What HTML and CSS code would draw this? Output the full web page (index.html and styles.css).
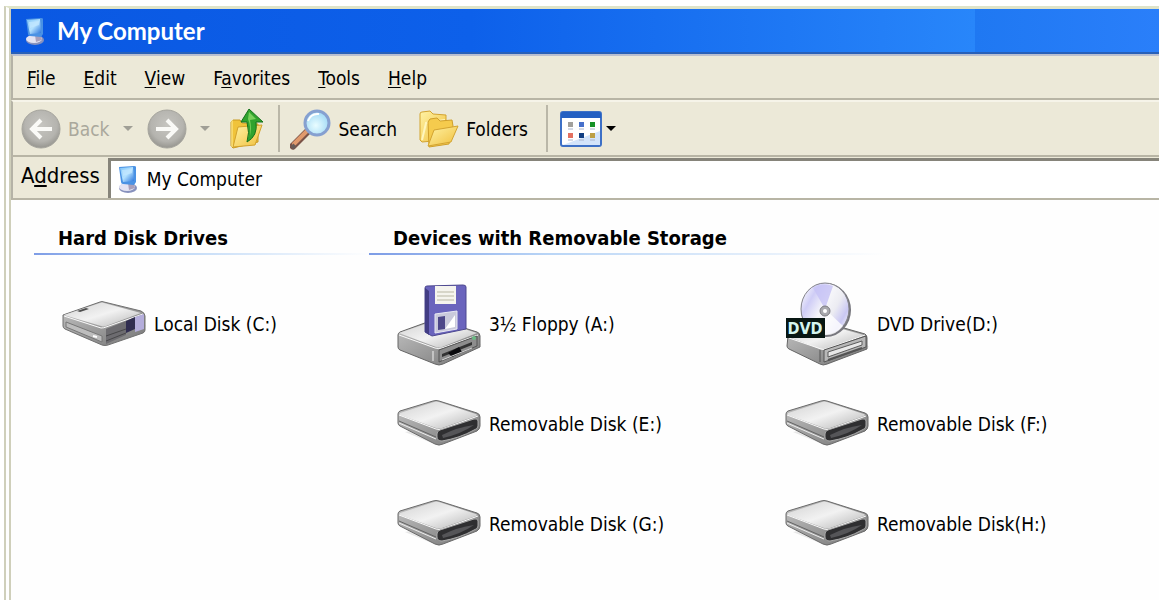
FILE: index.html
```html
<!DOCTYPE html>
<html lang="en">
  <head>
    <meta charset="UTF-8" />
    <meta name="viewport" content="width=device-width, initial-scale=1.0" />
    <title>My Computer</title>
    <link rel="stylesheet" href="styles.css">
  </head>
  <body>
    <!-- shared drawings -->
    <svg class="defs" width="0" height="0" aria-hidden="true">
      <defs>
        <linearGradient id="screen" x1="0" y1="0" x2="1" y2="1">
          <stop offset="0" stop-color="#7fc4f8" />
          <stop offset="0.5" stop-color="#b4e2ff" />
          <stop offset="1" stop-color="#2a74dc" />
        </linearGradient>
        <linearGradient id="top" x1="0" y1="0" x2="1" y2="1">
          <stop offset="0" stop-color="#d2d2d2" />
          <stop offset="0.5" stop-color="#f2f2f2" />
          <stop offset="1" stop-color="#b4b4b4" />
        </linearGradient>
        <linearGradient id="side" x1="0" y1="0" x2="1" y2="1">
          <stop offset="0" stop-color="#c4c4c4" />
          <stop offset="1" stop-color="#757575" />
        </linearGradient>
        <linearGradient id="yellow" x1="0" y1="0" x2="1" y2="1">
          <stop offset="0" stop-color="#fff3a6" />
          <stop offset="1" stop-color="#f0bf3c" />
        </linearGradient>
        <radialGradient id="gray" cx="0.5" cy="0.4" r="0.6">
          <stop offset="0" stop-color="#c6c5c0" />
          <stop offset="0.7" stop-color="#b5b4af" />
          <stop offset="1" stop-color="#96958f" />
        </radialGradient>
        <radialGradient id="lens" cx="0.45" cy="0.6" r="0.6">
          <stop offset="0" stop-color="#e9fdff" />
          <stop offset="1" stop-color="#9fd8f5" />
        </radialGradient>
        <linearGradient id="disc" x1="0" y1="0.2" x2="1" y2="0.8">
          <stop offset="0" stop-color="#f7f7fc" />
          <stop offset="0.2" stop-color="#cfcdf6" />
          <stop offset="0.45" stop-color="#f6f6fa" />
          <stop offset="0.65" stop-color="#ececf2" />
          <stop offset="0.85" stop-color="#cac8f4" />
          <stop offset="1" stop-color="#f2f2f8" />
        </linearGradient>
      </defs>
      <symbol id="computer" viewBox="0 0 22 28">
        <ellipse cx="11" cy="23" rx="9" ry="5" fill="#8791bd" />
        <ellipse cx="10" cy="22" rx="8" ry="4" fill="#e3e3f3" />
        <path d="M11 18l6 1 1 4-6 2z" fill="#a9a0bb" />
        <path d="M2 2l15-1q2 0 2 1v15l-2 3-11-1q-2 0-2-2z" fill="#4a92e4" />
        <path d="M3 3l13-1 1 14-11 1z" fill="url(#screen)" />
        <path d="M5 5l10-1v4l-9 3z" fill="#c5e8ff" opacity="0.7" />
      </symbol>
      <symbol id="removable" viewBox="0 0 84 48">
        <path d="M8 32l34 14 42-22-6-4z" fill="#d8d8d8" opacity="0.6" />
        <path d="M1 14q0-2 2-3L36 1q3-1 6 0l38 12q3 1 3 4v9q0 3-3 5L46 44q-4 2-8 0L3 26q-2-1-2-3z" fill="url(#side)" stroke="#6a6a6a" />
        <path d="M3 13L37 2q2-1 5 0l37 12q2 1 0 2L45 28q-3 1-6 0L3 15q-1-1 0-2z" fill="url(#top)" />
        <path d="M2 15l37 14q3 1 6 0l36-13" fill="none" stroke="#fafafa" />
        <path d="M2 21l37 16" fill="none" stroke="#646464" />
        <path d="M2 23l37 16" fill="none" stroke="#eee" />
        <path d="M40 34q0-3 3-4l34-11q4-1 4 2v5q0 3-4 4-14 8-32 11-5 0-5-4z" fill="#2f2f31" stroke="#aaa" />
        <path d="M45 35q16-8 32-10-13 9-31 13z" fill="#555558" />
      </symbol>
    </svg>

    <div class="window">
      <header class="titlebar">
        <svg class="title-icon" viewBox="0 0 22 28"><use href="#computer" /></svg>
        <h1>My Computer</h1>
      </header>

      <nav class="menubar">
        <button type="button"><u>F</u>ile</button>
        <button type="button"><u>E</u>dit</button>
        <button type="button"><u>V</u>iew</button>
        <button type="button">F<u>a</u>vorites</button>
        <button type="button"><u>T</u>ools</button>
        <button type="button"><u>H</u>elp</button>
      </nav>

      <div class="toolbar">
        <button type="button" class="tool nav" disabled>
          <svg width="40" height="40" viewBox="0 0 40 40">
            <circle cx="20" cy="20" r="19" fill="url(#gray)" stroke="#a5a49d" />
            <path d="M31 20H12M20 11l-9 9 9 9" fill="none" stroke="#fafaf7" stroke-width="4" />
          </svg>
          Back
          <svg class="arrow" width="10" height="6" viewBox="0 0 10 6"><path d="M0 0h10L5 5z" fill="#a09f96" /></svg>
        </button>
        <button type="button" class="tool nav" aria-label="Forward" disabled>
          <svg width="40" height="40" viewBox="0 0 40 40">
            <circle cx="20" cy="20" r="19" fill="url(#gray)" stroke="#a5a49d" />
            <path d="M9 20h19M20 11l9 9-9 9" fill="none" stroke="#fafaf7" stroke-width="4" />
          </svg>
          <svg class="arrow" width="10" height="6" viewBox="0 0 10 6"><path d="M0 0h10L5 5z" fill="#a09f96" /></svg>
        </button>
        <button type="button" class="tool up" aria-label="Up">
          <svg width="34" height="42" viewBox="0 0 34 42">
            <path d="M1 14l2-2h7l2 3 16 1v18L3 40 1 38z" fill="#f0c33a" stroke="#c99a22" />
            <path d="M3 39l5-20 24-2-7 20z" fill="url(#yellow)" stroke="#d2a22b" />
            <path d="M2 12v27" stroke="#fff09c" />
            <path d="M19 1l14 13h-7q2 14-9 20 3-9 0-20h-6z" fill="#30a32e" stroke="#14711b" />
            <path d="M19 4l7 7-6 1q2 9 0 16 1-10-2-17z" fill="#7ad05c" />
          </svg>
        </button>
        <span class="separator"></span>
        <button type="button" class="tool search">
          <svg width="42" height="42" viewBox="0 0 42 42">
            <path d="M3 38l15-15" stroke="#7a5347" stroke-width="7" stroke-linecap="round" />
            <path d="M4 36l13-13" stroke="#e0996c" stroke-width="4" stroke-linecap="round" />
            <path d="M2 37l3 3" stroke="#665c58" stroke-width="4" />
            <circle cx="27" cy="15" r="12" fill="url(#lens)" stroke="#86a0d0" stroke-width="3" />
            <path d="M18 13q3-8 11-7" fill="none" stroke="#fff" stroke-width="2" />
          </svg>
          Search
        </button>
        <button type="button" class="tool folders">
          <svg width="40" height="38" viewBox="0 0 40 38">
            <path d="M1 4q0-2 2-2l8-1 3 3 13 1v7l-2 18-22 2-2-2z" fill="url(#yellow)" stroke="#d3a431" />
            <path d="M3 30l4-17 19-3" fill="none" stroke="#fff6bd" stroke-width="2" />
            <path d="M9 12l2-3 7-1 3 3 12-1 1 6-4 18-20 3z" fill="#f5cb4d" stroke="#cf9f2b" />
            <path d="M9 36l6-16 24-4-7 16z" fill="url(#yellow)" stroke="#d3a431" />
          </svg>
          Folders
        </button>
        <span class="separator"></span>
        <button type="button" class="tool views" aria-label="Views">
          <svg width="42" height="36" viewBox="0 0 42 36">
            <rect x="1" y="1" width="40" height="34" rx="2" fill="#fff" stroke="#3d70c6" stroke-width="2" />
            <path d="M40 8v26H3l37-14z" fill="#d3e4fa" />
            <path d="M1 3q0-2 2-2h36q2 0 2 2v4H1z" fill="#235fc2" />
            <path d="M8 11h5v5H8z" fill="#a1a09c" />
            <path d="M19 11h5v5h-5z" fill="#4770cb" />
            <path d="M30 11h5v5h-5z" fill="#159126" />
            <path d="M8 22h5v5H8z" fill="#e37060" />
            <path d="M19 22h5v5h-5z" fill="#123f83" />
            <path d="M30 22h5v5h-5z" fill="#bd9f45" />
            <path d="M8 18h5M19 18h5M30 18h5M8 29h5M19 29h5M30 29h5" stroke="#a9b4cc" />
          </svg>
          <svg class="arrow" width="10" height="6" viewBox="0 0 10 6"><path d="M0 0h10L5 5z" /></svg>
        </button>
      </div>

      <div class="addressbar">
        <label for="address">A<u>d</u>dress</label>
        <div class="field">
          <svg class="field-icon" viewBox="0 0 22 28"><use href="#computer" /></svg>
          <input type="text" id="address" value="My Computer" />
        </div>
      </div>

      <main class="content">
        <section>
          <h2>Hard Disk Drives</h2>
          <ul class="drives">
            <li>
              <a href="#">
                <svg width="84" height="48" viewBox="0 0 84 48">
                  <path d="M8 32l34 14 42-20-6-6z" fill="#d8d8d8" opacity="0.6" />
                  <path d="M1 15l37-13q2-1 4 0l37 9q4 2 4 5v14q0 2-2 3L46 45q-3 1-6 0L3 29q-2-1-2-3z" fill="url(#side)" stroke="#707070" />
                  <path d="M2 15L38 3q2-1 4 0l37 10-35 13q-2 1-5 0z" fill="url(#top)" />
                  <path d="M2 16l37 12q3 0 5-1l37-13" fill="none" stroke="#fafafa" />
                  <path d="M4 22l36 14v6L4 27z" fill="#bdbdbd" stroke="#777" />
                  <path d="M44 29l20-8v14l-20 9z" fill="#6d6c70" />
                  <path d="M64 21l9-4v12l-9 4z" fill="#302d50" />
                  <path d="M73 17l9-3v15l-9 3z" fill="#b4addb" />
                  <path d="M44 36l20-7m-20 12l20-8" stroke="#474749" />
                  <path d="M15 11l9-3 3 1-9 3z" fill="#4e4e4e" />
                  <path d="M31 36l4 1" stroke="#fff" stroke-width="2" />
                </svg>
                <span>Local Disk (C:)</span>
              </a>
            </li>
          </ul>
        </section>

        <section>
          <h2>Devices with Removable Storage</h2>
          <ul class="drives two">
            <li>
              <a href="#">
                <svg width="84" height="84" viewBox="0 -2 84 84">
                  <path d="M6 66l36 15 42-20-8-8z" fill="#d8d8d8" opacity="0.6" />
                  <path d="M1 51q0-2 2-3l33-12q3-1 6 0l38 12q3 1 3 4v11L46 80q-4 2-8 0L3 66q-2-1-2-3z" fill="url(#side)" stroke="#666" />
                  <path d="M2 49l35-12h5l38 12-35 14q-3 1-6 0z" fill="url(#top)" />
                  <path d="M2 51l36 13q3 1 7 0l36-13" fill="none" stroke="#fafafa" />
                  <path d="M36 67v10" stroke="#f2f2f2" />
                  <path d="M42 66l38-14v10L42 78z" fill="#8d8d8d" stroke="#555" />
                  <path d="M45 70l30-12v3L45 73z" fill="#333" />
                  <path d="M51 69l11-6 3 5-10 5z" fill="#0b0b0e" />
                  <path d="M45 76l30-12" stroke="#d5d5d5" />
                  <circle cx="77" cy="54" r="2" fill="#69bb83" />
                  <path d="M28 4q0-2 2-2l36-1q3 0 3 2v42L35 52l-7-4z" fill="#6a64bd" stroke="#4d488f" />
                  <path d="M28 4l4 3v44l-4-3z" fill="#423d84" />
                  <path d="M38 2h21v18H38z" fill="#f5f4ee" />
                  <path d="M40 8h17M40 12h17M40 16h17" stroke="#b9b7a4" />
                  <path d="M38 30l22-3v18l-22 4z" fill="#c9c9db" stroke="#e8e8f4" />
                  <path d="M41 33l7-1v13l-7 1z" fill="#4d4789" />
                  <path d="M48 45l10-14v12z" fill="#fff" />
                </svg>
                <span>3½ Floppy (A:)</span>
              </a>
            </li>
            <li>
              <a href="#">
                <svg width="84" height="84" viewBox="0 -2 84 84">
                  <path d="M6 66l36 15 42-18-8-10z" fill="#d8d8d8" opacity="0.6" />
                  <path d="M3 52l35-14 42 12q2 1 2 4v11L42 80q-4 2-7 0L4 65q-2-1-2-3z" fill="url(#side)" stroke="#666" />
                  <path d="M4 53l35-13 40 11-38 14q-3 1-6 0z" fill="url(#top)" />
                  <ellipse cx="41" cy="26" rx="25" ry="27" fill="#77777e" />
                  <ellipse cx="40" cy="25" rx="24" ry="26" fill="url(#disc)" stroke="#85858c" />
                  <path d="M40 25L28 4q11-6 20-2z" fill="#c6c2f5" opacity="0.8" />
                  <path d="M40 25l18 17q-8 10-18 9z" fill="#fff" opacity="0.8" />
                  <circle cx="40" cy="27" r="5" fill="#a8a8ad" stroke="#7b7b80" />
                  <circle cx="40" cy="27" r="2" fill="#fff" />
                  <path d="M4 54l32 11q3 1 5 0l39-14" fill="none" stroke="#fafafa" />
                  <path d="M35 66v12" stroke="#555" />
                  <path d="M39 66l42-14v11L39 78z" fill="#b8b8b8" stroke="#555" />
                  <path d="M43 68l34-11v4L43 73z" fill="#e8e8e8" stroke="#5b5b5b" />
                  <path d="M43 76l34-12" stroke="#555" stroke-width="2" />
                  <path d="M1 34h39v20H1z" fill="#081713" />
                  <text class="dvd" x="20" y="50">DVD</text>
                </svg>
                <span>DVD Drive(D:)</span>
              </a>
            </li>
            <li>
              <a href="#">
                <svg width="84" height="48"><use href="#removable" /></svg>
                <span>Removable Disk (E:)</span>
              </a>
            </li>
            <li>
              <a href="#">
                <svg width="84" height="48"><use href="#removable" /></svg>
                <span>Removable Disk (F:)</span>
              </a>
            </li>
            <li>
              <a href="#">
                <svg width="84" height="48"><use href="#removable" /></svg>
                <span>Removable Disk (G:)</span>
              </a>
            </li>
            <li>
              <a href="#">
                <svg width="84" height="48"><use href="#removable" /></svg>
                <span>Removable Disk(H:)</span>
              </a>
            </li>
          </ul>
        </section>
      </main>
    </div>
  </body>
</html>
```
FILE: styles.css
```css
* {
  box-sizing: border-box;
}
body {
  margin: 0;
  padding: 6px 0 3px 4px;
  background-color: #fff;
  color: #000;
  font-family: "DejaVu Sans Condensed", "DejaVu Sans", sans-serif;
  font-size: 19px;
  line-height: 22px;
}
button,
input {
  font: inherit;
  color: inherit;
}
button {
  padding: 0;
  border: none;
  background: none;
}
svg {
  display: block;
  flex: none;
}
u {
  text-underline-offset: 2px;
}
.defs {
  position: absolute;
}
.window {
  display: flex;
  flex-direction: column;
  min-height: calc(100vh - 9px);
  border-top: 3px solid #dfe3c8;
  border-left: 7px double #cfcfba;
  background-color: #fefefe;
}
.titlebar {
  display: flex;
  align-items: center;
  gap: 11px;
  height: 45px;
  padding-left: 13px;
  border-bottom: 2px solid #2860b8;
  background: linear-gradient(to right, #0a58e2, #0d60ea 40%, #2886fa 84%, #1f78f2 84%, #2a7ffa);
  color: #fff;
}
.title-icon,
.field-icon {
  width: 22px;
  height: 28px;
}
.titlebar h1 {
  margin: 0;
  font-family: Lato, sans-serif;
  font-size: 24px;
  font-weight: bold;
}
.menubar,
.toolbar,
.addressbar {
  display: flex;
  align-items: center;
  background-color: #ece9d8;
  border-left: 2px solid #b5b3a6;
}
.menubar {
  gap: 28px;
  height: 46px;
  padding: 2px 0 0 14px;
  border-top: 2px solid #b9bfd0;
  border-bottom: 2px solid #b8b5a5;
}
.toolbar {
  height: 57px;
  padding-left: 8px;
  border-top: 2px solid #f6f4e9;
  border-bottom: 2px solid #b8b5a5;
}
.tool {
  display: flex;
  align-items: center;
  gap: 7px;
}
.nav {
  margin-right: 14px;
  color: #aaa89c;
}
.nav .arrow {
  margin-left: 6px;
}
.up {
  margin: 0 14px 0 6px;
}
.search {
  margin-right: 22px;
}
.folders {
  margin-right: 18px;
}
.separator {
  width: 2px;
  height: 47px;
  margin-right: 10px;
  background-color: #bab7a8;
}
.views {
  margin-left: 2px;
  gap: 4px;
}
.addressbar {
  gap: 8px;
  height: 43px;
  padding-left: 8px;
  border-bottom: 2px solid #b8b5a5;
}
.addressbar label {
  padding-bottom: 4px;
  font-size: 22px;
}
.field {
  display: flex;
  flex: 1;
  align-items: center;
  gap: 8px;
  height: 40px;
  padding-left: 6px;
  border-top: 3px solid #86847a;
  border-left: 3px solid #86847a;
  background-color: #fff;
}
.field input {
  flex: 1;
  padding: 0;
  border: none;
  background: none;
}
.content {
  display: grid;
  grid-template-columns: 335px 1fr;
  flex: 1;
  padding: 27px 0 0 23px;
}
h2 {
  margin: 0;
  padding: 0 0 4px 24px;
  border-bottom: 2px solid;
  border-image: linear-gradient(to right, #7d9ce6, #b9d5f6 35%, #fefefe) 1;
  font-size: 20px;
  line-height: 22px;
}
.content section:last-child h2 {
  max-width: 516px;
}
.drives {
  display: grid;
  grid-auto-rows: 100px;
  margin: 0;
  padding: 19px 0 0 28px;
  list-style: none;
}
.two {
  grid-template-columns: 388px 1fr;
}
.drives a {
  display: flex;
  align-items: center;
  gap: 8px;
  height: 100%;
  color: inherit;
  text-decoration: none;
  white-space: nowrap;
}
.dvd {
  font-size: 16px;
  font-weight: bold;
  text-anchor: middle;
  fill: #d5f5ef;
}
```
